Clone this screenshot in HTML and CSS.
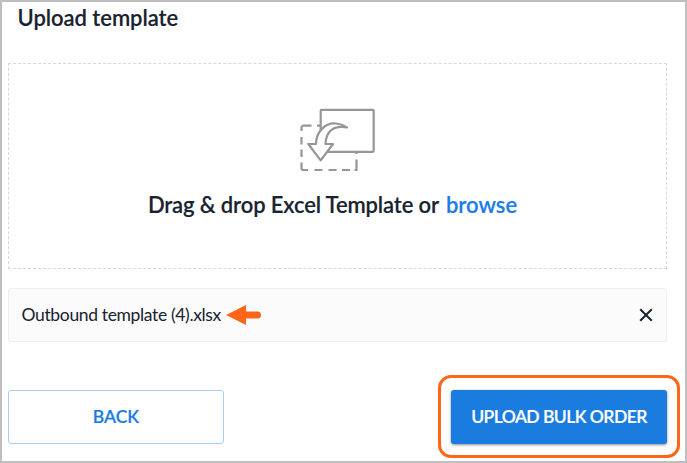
FILE: index.html
```html
<!DOCTYPE html>
<html lang="en">
<head>
<meta charset="utf-8">
<title>Upload template</title>
<link rel="stylesheet" href="styles.css">
</head>
<body>
<main class="panel">
  <h1 class="title">Upload template</h1>
  <section class="dropzone">
    <svg class="drop-icon" width="80" height="68" viewBox="0 0 80 68" fill="none" stroke="#969696" stroke-width="2.2" stroke-linejoin="round">
      <path d="M1.5 24V20.7a2 2 0 0 1 2-2H11.5M17 18.7H20.7M1.5 30V37.5M1.5 42.5V50M1.5 55.5V61a2 2 0 0 0 2 2H8M14.5 63H22.5M28.5 63H36.5M42 63H50M54.5 63H56.5V60M56.5 52.5V60M56.5 45V47"/>
      <rect x="20.7" y="2.8" width="53" height="42" rx="1"/>
      <path d="M8.3 37H16C16 25 25 15.5 36 16.5C40 16.8 44 18.5 47 20.5C34 18 26 24 25.5 37H33L20.7 53.3Z" fill="#fff"/>
    </svg>
    <p class="prompt">Drag &amp; drop Excel Template or <a class="browse">browse</a></p>
  </section>
  <section class="file">
    <span class="file-name">Outbound template (4).xlsx</span>
    <svg class="pointer" width="36" height="22" viewBox="0 0 36 22"><path d="M0 11L20 1V7.5H31.5a3.5 3.5 0 0 1 0 7H20V21Z" fill="#ff661a"/></svg>
    <svg class="close" width="14" height="14" viewBox="0 0 14 14"><path d="M1.2 1.2l11.6 11.6M12.8 1.2L1.2 12.8" stroke="#182230" stroke-width="2"/></svg>
  </section>
  <footer class="actions">
    <button class="button back">BACK</button>
    <div class="highlight"><button class="button upload">UPLOAD BULK ORDER</button></div>
  </footer>
</main>
</body>
</html>
```
FILE: styles.css
```css
* { box-sizing: border-box; }
body { margin: 0; background: #fff; font-family: Lato, "Liberation Sans", sans-serif; color: #182230; }
.panel { width: 687px; height: 463px; border: 2px solid #bfbfbf; padding: 0 6px; overflow: hidden; }
.title { margin: 0; padding: 2px 0 0 9.5px; height: 61px; font-size: 22px; line-height: 28px; font-weight: 600; letter-spacing: -0.05px; -webkit-text-stroke: 0.15px; }
.dropzone { width: 659px; height: 206px; border: 1px dashed #d3d9e0; padding-top: 43px; display: flex; flex-direction: column; align-items: center; }
.drop-icon { margin-left: 4px; }
.prompt { margin: 14px 0 0; padding-right: 10px; font-size: 22px; line-height: 32px; font-weight: 600; letter-spacing: -0.13px; white-space: nowrap; -webkit-text-stroke: 0.15px; }
.browse { color: #1a7ce8; margin-left: 2px; letter-spacing: 0; }
.file { width: 659px; height: 54px; margin-top: 19px; padding: 0 13.5px 0 12.5px; border: 1px solid #eee; border-radius: 3px; background: #fbfbfb; display: flex; align-items: center; }
.file-name { width: 200px; font-size: 17.5px; line-height: 22px; letter-spacing: -0.35px; white-space: nowrap; }
.pointer { margin-left: 4px; }
.close { margin-left: auto; }
.actions { width: 672px; margin-top: 33px; display: flex; justify-content: space-between; }
.button { width: 216px; height: 54px; margin: 0; padding: 0; border-radius: 3px; font: 600 17.5px/24px Lato, "Liberation Sans", sans-serif; white-space: nowrap; -webkit-text-stroke: 0.2px; }
.back { margin-top: 15px; background: #fff; border: 1px solid #a9cff8; color: #1a7ce1; }
.upload { display: block; border: 0; background: #1b7ce0; color: #fff; letter-spacing: -0.54px; box-shadow: 0 1px 3px rgba(0,0,0,.45); }
.highlight { width: 242px; height: 83px; padding: 12px 0 0 10px; border: 3px solid #ff661a; border-radius: 13px; }
```
